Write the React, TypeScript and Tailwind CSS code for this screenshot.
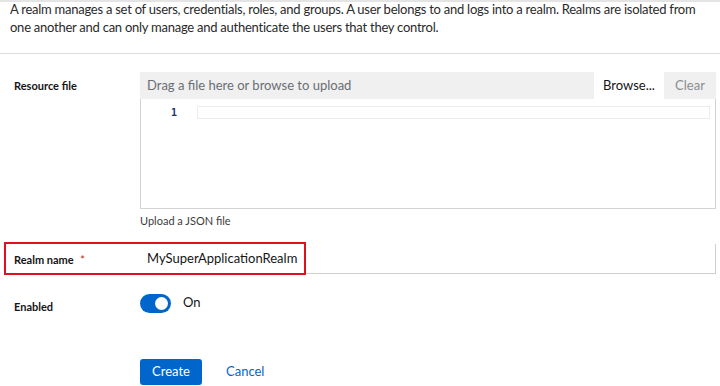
import { useState } from "react";

const font = { fontFamily: 'Lato, "Liberation Sans", sans-serif' };

export default function App() {
  const [enabled, setEnabled] = useState(true);
  const [name, setName] = useState("MySuperApplicationRealm");

  return (
    <div
      className="relative w-[720px] h-[386px] overflow-hidden bg-white text-[#151515] border-t-2 border-[#e4e4e4]"
      style={font}
    >
      <p className="pl-[10px] pr-[2px] -mt-[2px] text-[13px] tracking-[-0.25px] leading-[18px] text-[#2a2a2a] h-[53px]">
        A realm manages a set of users, credentials, roles, and groups. A user belongs to and logs into a realm. Realms are
        isolated from one another and can only manage and authenticate the users that they control.
      </p>
      <div className="border-t border-[#dcdcdc]" />

      {/* resource file */}
      <div className="flex mt-[18px]">
        <div className="w-[140px] pl-[14px] pt-[6px] text-[11px] font-bold">Resource file</div>
        <div className="w-[576px]">
          <div className="flex h-[27px] bg-[#f0f0f0] items-center">
            <div className="flex-1 pl-[7px] text-[13px] text-[#6a6e73]">Drag a file here or browse to upload</div>
            <div className="w-[70px] h-full bg-white flex items-center justify-center text-[13px] text-[#151515]">
              Browse...
            </div>
            <div className="w-[52px] text-center text-[13px] text-[#8a8d90]">Clear</div>
          </div>
          <div className="h-[110px] border border-t-0 border-[#d2d2d2] flex pt-[7px]">
            <div
              className="w-[56px] text-right pr-[20px] text-[10px] leading-[13px] text-[#1c3370] font-bold"
              style={{ fontFamily: '"DejaVu Sans Mono", monospace' }}
            >
              1
            </div>
            <div className="flex-1 mr-[5px] h-[13px] border border-[#ececec]" />
          </div>
          <div className="mt-[4px] text-[11px] text-[#3c3c3c]">Upload a JSON file</div>
        </div>
      </div>

      {/* realm name */}
      <div className="flex mt-[14px] items-center">
        <div className="w-[140px] pl-[14px] pt-[3px] text-[11px] font-bold">
          Realm name <span className="ml-[4px] text-[#c9190b] font-normal">*</span>
        </div>
        <input
          value={name}
          onChange={(e) => setName(e.target.value)}
          className="w-[576px] h-[30px] px-[7px] text-[13px] text-[#151515] border-0 border-b border-r border-[#cfcfcf] outline-none bg-white"
          style={font}
        />
      </div>

      {/* enabled */}
      <div className="flex mt-[19px]">
        <div className="w-[140px] pl-[14px] pt-[6px] text-[11px] font-bold">Enabled</div>
        <button onClick={() => setEnabled(!enabled)} className="flex items-center gap-[12px]">
          <span
            className={`w-[31px] h-[19px] rounded-full flex items-center px-[3px] ${
              enabled ? "bg-[#0066cc] justify-end" : "bg-[#8a8d90] justify-start"
            }`}
          >
            <span className="w-[13px] h-[13px] rounded-full bg-white" />
          </span>
          <span className="text-[13px] text-[#151515] -mt-[2px]">{enabled ? "On" : "Off"}</span>
        </button>
      </div>

      {/* actions */}
      <div className="flex items-center mt-[44px] pl-[140px] gap-[24px]">
        <button className="w-[62px] h-[26px] rounded-[3px] bg-[#0066cc] text-white text-[13px]">Create</button>
        <button className="text-[13px] text-[#0066cc]">Cancel</button>
      </div>

      {/* annotation box */}
      <div className="absolute left-[4px] top-[240px] w-[302px] h-[33px] border-2 border-[#e0101e] pointer-events-none" />
    </div>
  );
}
